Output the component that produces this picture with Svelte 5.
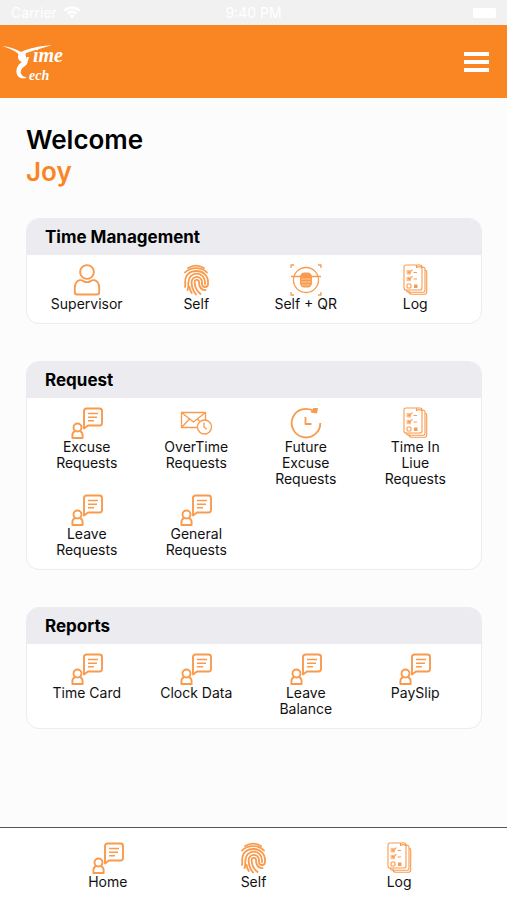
<script lang="ts">
	type IconName = 'person' | 'finger' | 'scan' | 'list' | 'chat' | 'mail' | 'clock';

	interface Tile {
		label: string;
		icon: IconName;
	}

	interface Section {
		title: string;
		tiles: Tile[];
	}

	let { name = 'Joy' }: { name?: string } = $props();

	const sections: Section[] = [
		{
			title: 'Time Management',
			tiles: [
				{ label: 'Supervisor', icon: 'person' },
				{ label: 'Self', icon: 'finger' },
				{ label: 'Self + QR', icon: 'scan' },
				{ label: 'Log', icon: 'list' }
			]
		},
		{
			title: 'Request',
			tiles: [
				{ label: 'Excuse Requests', icon: 'chat' },
				{ label: 'OverTime Requests', icon: 'mail' },
				{ label: 'Future Excuse Requests', icon: 'clock' },
				{ label: 'Time In Liue Requests', icon: 'list' },
				{ label: 'Leave Requests', icon: 'chat' },
				{ label: 'General Requests', icon: 'chat' }
			]
		},
		{
			title: 'Reports',
			tiles: [
				{ label: 'Time Card', icon: 'chat' },
				{ label: 'Clock Data', icon: 'chat' },
				{ label: 'Leave Balance', icon: 'chat' },
				{ label: 'PaySlip', icon: 'chat' }
			]
		}
	];

	const tabs: Tile[] = [
		{ label: 'Home', icon: 'chat' },
		{ label: 'Self', icon: 'finger' },
		{ label: 'Log', icon: 'list' }
	];
</script>

{#snippet icon(kind: IconName)}
	<svg class="icon" viewBox="0 0 32 32" aria-hidden="true">
		{#if kind === 'person'}
			<g stroke-width="1.9">
				<circle cx="16" cy="8" r="6.9" />
				<path d="M8.8 16.2C5.8 17 3.8 20 3.8 24v4.2c0 1.4.9 2.3 2.3 2.3h19.8c1.4 0 2.3-.9 2.3-2.3V24c0-4-2-7-5-7.8-1.6-.4-2.6.3-3.6.9-2.2 1.3-5 1.3-7.2 0-1-.6-2-1.3-3.6-.9z" />
			</g>
		{:else if kind === 'finger'}
			<g stroke-width="1.8" stroke-linecap="round">
				<path d="M8 4Q16-.8 24 4" />
				<path d="M5 8.500C10.500 2.600 21.500 2.600 27 8.500" />
				<path d="M5 23c.5-1.500.2-3 .2-5C5.200 10.500 10 7 16.500 7S28 11.500 28 18v2a3 3 0 0 1-6 0v-2a5.200 5.200 0 0 0-10.400 0c0 5 1.600 9 4.400 12.500" />
				<path d="M7.500 26c1-2 .9-4.500.9-8a8.300 8.300 0 0 1 16.600 0v2" />
				<path d="M9.500 23c.4 2.500 1.200 4.300 2.300 6" />
				<path d="M20.500 30c-3.800-3-5.800-7-5.900-12a2.200 2.200 0 0 1 4.400 0c0 5 2 8 6.500 8.200" />
			</g>
		{:else if kind === 'scan'}
			<g stroke-width="1.300">
				<path d="M1 4V1h3M28 1h3v3M31 28v3h-3M4 31H1v-3" />
				<circle cx="16" cy="16" r="12.500" />
				<path d="M1 12.500h30" />
			</g>
			<rect class="solid" x="10" y="8.500" width="12" height="15" rx="4.500" />
			<path class="cut" d="M11 15h10M11 18h10M12 21h8" />
		{:else if kind === 'list'}
			<g stroke-width="1.100">
				<path d="M10 26.500v1c0 1.500 1 2.700 2.500 2.700h13c1.300 0 2.200-1 2.200-2.200V8c0-1-.7-1.700-1.700-1.700" />
				<path d="M7.500 26c0 1.400.8 2.200 2.200 2.200h14.600c1 0 1.700-.7 1.700-1.700V5c0-1-.7-1.700-1.700-1.700H23" />
				<rect x="5" y="1" width="18" height="25" rx="2" />
				<path d="M17.500 1v2.500l2.500-1 2.500 1V1" />
				<path d="M14.500 8.500h3.500M14.500 15h3.500" />
				<rect x="8" y="20" width="4" height="4" rx="1" />
				<path d="M9 7.500l1.500 1.500 3-3.500M9 14l1.500 1.500 3-3.500" />
			</g>
			<path class="solid soft" d="M7.500 6h4.500v4.500H7.500zM7.500 12.700h4.500v4.500H7.500z" />
			<path class="solid" d="M15 20.500h3.500V24H15z" />
		{:else if kind === 'chat'}
			<g stroke-width="1.900">
				<path d="M15.500 1.500h13c1.500 0 2.500 1 2.500 2.500v12c0 1.500-1 2.500-2.500 2.500H17l-4 3V4c0-1.500 1-2.500 2.500-2.500z" />
				<path stroke-width="1.500" d="M17 6.500h10M17 10.200h9M17 13.700h6" />
				<circle cx="6.500" cy="20.500" r="4" />
				<path d="M4 24.200c-1.700.8-2.600 2-2.600 3.800v3h10.200v-3c0-1.800-.9-3-2.600-3.800" />
			</g>
		{:else if kind === 'mail'}
			<g stroke-width="1.300">
				<path d="M17 20.500H1.500v-15h24v7.500" />
				<path d="M1.500 5.500l12 9.500 12-9.500M1.500 20.500l8-8.500M17.500 12l2 2" />
				<circle cx="24.500" cy="20" r="7" />
				<path d="M24 15.500v4.500l2.700 2.300" />
			</g>
		{:else}
			<g stroke-width="1.800">
				<path d="M30.300 16A14.300 14.300 0 1 1 24 4.300" />
				<path d="M15.500 10v7h6" />
			</g>
			<path class="solid" d="M20.500 5.500l3-4.500h4.500l-1 5.500z" />
		{/if}
	</svg>
{/snippet}

<div class="screen">
	<div class="status-bar">
		<span class="carrier">
			Carrier
			<svg class="wifi" viewBox="0 0 18 13" aria-hidden="true">
				<path d="M1.500 4.500c4.500-4 10.500-4 15 0M4.500 7.500c3-2.500 6-2.500 9 0" />
				<path class="dot" d="M6.500 9.500c1.700-1.300 3.300-1.300 5 0L9 12.500z" />
			</svg>
		</span>
		<span>9:40 PM</span>
		<span class="battery"></span>
	</div>

	<header class="top-bar">
		<a href="#home" class="logo" aria-label="Time Tech">
			<svg viewBox="0 0 66 42" aria-hidden="true">
				<path d="M0 5c7 .5 13 3 19 6 9-4 19-6 31-7-8 3-18 5-26 8-2 3 3 6 1 11-1 1.500-3 2.500-4.500 4C17 31 19 36 25 36.500c-5 2.500-10 0-10.500-5C14 26 17 23 20 21c-3-1-5-4-3.500-8C12 9 6 7 0 5z" />
				<path d="M18 24c4-1 6-4 7-8l2 0c-1 5-3 9-8 10z" />
				<text class="upper" x="31" y="21">ime</text>
				<text class="lower" x="27" y="39">ech</text>
			</svg>
		</a>
		<button type="button" class="menu-btn" aria-label="Menu">
			<svg viewBox="0 0 25 20" aria-hidden="true">
				<path d="M0 2h25M0 10h25M0 18h25" />
			</svg>
		</button>
	</header>

	<main>
		<h1>Welcome <span>{name}</span></h1>

		{#each sections as section}
			<section class="card">
				<h2>{section.title}</h2>
				<div class="tiles">
					{#each section.tiles as tile}
						<button type="button" class="tile">
							{@render icon(tile.icon)}
							<span>{tile.label}</span>
						</button>
					{/each}
				</div>
			</section>
		{/each}
	</main>

	<nav>
		{#each tabs as tab}
			<a href="#{tab.label.toLowerCase()}" class="tab">
				{@render icon(tab.icon)}
				<span>{tab.label}</span>
			</a>
		{/each}
	</nav>
</div>

<style>
	:global(body) {
		margin: 0;
		background: #fcfcfd;
	}

	.screen {
		display: flex;
		flex-direction: column;
		min-height: 100vh;
		font-family: Inter, 'Liberation Sans', sans-serif;
		color: #000;
	}

	.status-bar {
		display: grid;
		grid-template-columns: 1fr auto 1fr;
		align-items: center;
		height: 25px;
		padding: 0 11px;
		background: #f1f1f1;
		color: #fff;
		font-size: 14px;
		box-sizing: border-box;
	}

	.carrier {
		display: flex;
		align-items: center;
		gap: 6px;
	}

	.wifi {
		width: 18px;
		height: 13px;
		fill: none;
		stroke: #fff;
		stroke-width: 2.5;
	}

	.wifi .dot {
		fill: #fff;
		stroke: none;
	}

	.battery {
		justify-self: end;
		width: 23px;
		height: 10px;
		border-radius: 2px;
		background: #fff;
	}

	.top-bar {
		display: flex;
		align-items: center;
		justify-content: space-between;
		height: 73px;
		padding: 0 18px 0 2px;
		background: #f98622;
	}

	.logo svg {
		display: block;
		width: 66px;
		height: 42px;
		fill: #fff;
	}

	.logo text {
		font-family: 'Liberation Serif', serif;
		font-style: italic;
		font-weight: bold;
	}

	.logo .upper {
		font-size: 20px;
	}

	.logo .lower {
		font-size: 14px;
	}

	.menu-btn {
		padding: 0;
		border: 0;
		background: none;
		cursor: pointer;
	}

	.menu-btn svg {
		display: block;
		width: 25px;
		height: 20px;
		stroke: #fff;
		stroke-width: 4;
	}

	main {
		flex: 1;
		display: flex;
		flex-direction: column;
		gap: 37px;
		padding: 26px 25px 37px 26px;
	}

	h1 {
		margin: 0 0 -7px;
		font-size: 26px;
		line-height: 32px;
		font-weight: 600;
	}

	h1 span {
		display: block;
		color: #f98622;
	}

	.card {
		border: 1px solid #ececf0;
		border-radius: 13px;
		background: #fff;
		overflow: hidden;
	}

	h2 {
		margin: 0;
		padding: 0 18px;
		background: #ebebf0;
		font-size: 17px;
		line-height: 36px;
		font-weight: 700;
	}

	.tiles {
		display: grid;
		grid-template-columns: repeat(4, 1fr);
		row-gap: 7px;
		padding: 9px 11px 12px 5px;
	}

	.tile,
	.tab {
		display: flex;
		flex-direction: column;
		align-items: center;
		padding: 0 18px;
		border: 0;
		background: none;
		font-family: inherit;
		font-size: 14px;
		line-height: 16px;
		color: #111;
		text-align: center;
		text-decoration: none;
		cursor: pointer;
	}

	.tiles {
		padding-bottom: 11px;
	}

	.icon {
		width: 32px;
		height: 32px;
		fill: none;
		stroke: #f99a4c;
		stroke-linejoin: round;
	}

	.icon .solid {
		fill: #f99a4c;
		stroke: none;
	}

	.icon .soft {
		opacity: 0.6;
	}

	.icon .cut {
		stroke: #fcc99d;
		stroke-width: 1;
	}

	nav {
		display: grid;
		grid-template-columns: repeat(3, 1fr);
		padding: 14px 35px 10px;
		border-top: 1px solid #555;
		background: #fff;
	}
</style>
